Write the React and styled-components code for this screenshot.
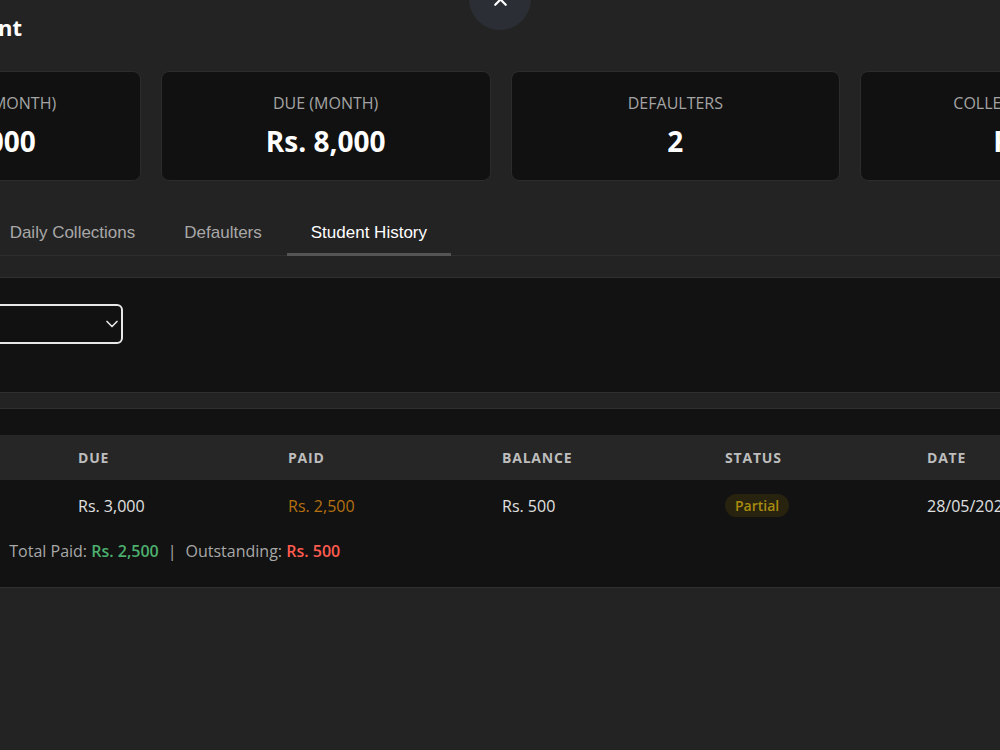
import React from 'react';
import styled, { createGlobalStyle } from 'styled-components';
import { X, ChevronDown } from 'lucide-react';

const GlobalStyle = createGlobalStyle`
  html, body {
    margin: 0;
    padding: 0;
    background: #232323;
  }
  body {
    font-family: "Open Sans", "Noto Sans", sans-serif;
    color: #e6e6e6;
    overflow: hidden;
  }
  * { box-sizing: border-box; }
`;

const Viewport = styled.div`
  width: 100vw;
  height: 100vh;
  overflow: hidden;
  display: flex;
  justify-content: center;
`;

const Modal = styled.div`
  position: relative;
  flex: 0 0 1380px;
  width: 1380px;
  padding-top: 12px;
`;

const CloseButton = styled.button`
  position: absolute;
  top: -32px;
  left: 50%;
  transform: translateX(-50%);
  width: 62px;
  height: 62px;
  border-radius: 50%;
  border: none;
  background: #2b2e35;
  color: #fff;
  display: flex;
  align-items: center;
  justify-content: center;
  padding: 0;
`;

const Header = styled.div`
  display: flex;
  align-items: center;
  height: 30px;
`;

const Title = styled.h2`
  margin: 0;
  width: 212px;
  text-align: right;
  white-space: nowrap;
  font-size: 22px;
  line-height: 30px;
  font-weight: 700;
  color: #fff;
`;

const StatsGrid = styled.div`
  display: grid;
  grid-template-columns: repeat(4, 1fr);
  gap: 20px;
  margin-top: 29px;
  padding-left: 1px;
`;

const StatCard = styled.div`
  height: 110px;
  background: #111;
  border: 1px solid #2c2c2c;
  border-radius: 8px;
  display: flex;
  flex-direction: column;
  align-items: center;
  padding-top: 20px;
`;

const StatLabel = styled.div`
  font-size: 16px;
  line-height: 22px;
  color: #a4a4a4;
  text-transform: uppercase;
`;

const StatValue = styled.div`
  margin-top: 9px;
  font-size: 28px;
  line-height: 36px;
  font-weight: 700;
  color: #fff;
`;

const TabList = styled.div`
  display: flex;
  gap: 1px;
  margin-top: 30px;
  border-bottom: 1px solid #2e2e2e;
`;

const Tab = styled.button`
  background: none;
  border: none;
  border-bottom: 3px solid ${p => (p.$active ? '#555' : 'transparent')};
  margin-bottom: -1px;
  padding: 12px 24px 10px;
  font-family: "Liberation Sans", Arial, sans-serif;
  font-size: 17px;
  line-height: 20px;
  color: ${p => (p.$active ? '#fff' : '#a8a8a8')};
  cursor: pointer;
`;

const Panel = styled.div`
  margin-top: ${p => p.$gap}px;
  background: #121212;
  border: 1px solid #303030;
  border-radius: 8px;
  padding: 26px 24px ${p => p.$bottom}px;
`;

const SelectWrap = styled.div`
  position: relative;
  width: 288px;
`;

const Select = styled.select`
  appearance: none;
  width: 100%;
  height: 40px;
  border: 2px solid #e8e8e8;
  border-radius: 6px;
  background: #111;
  color: #ddd;
  font-family: inherit;
  font-size: 15px;
  padding: 0 30px 0 12px;
  outline: none;
`;

const SelectIcon = styled.span`
  position: absolute;
  right: 1px;
  top: 10px;
  color: #e6e6e6;
  display: flex;
  pointer-events: none;
`;

const Table = styled.table`
  width: 100%;
  border-collapse: collapse;
  table-layout: fixed;
`;

const Th = styled.th`
  background: #262626;
  text-align: left;
  padding: 12px 16px;
  font-size: 14px;
  line-height: 21px;
  font-weight: 700;
  letter-spacing: 0.8px;
  color: #bdbdbd;
  text-transform: uppercase;
`;

const Td = styled.td`
  padding: 14px 16px;
  font-size: 16px;
  line-height: 22px;
  color: ${p => p.$color || '#e0e0e0'};
`;

const Badge = styled.span`
  display: inline-block;
  padding: 2px 10px;
  border-radius: 12px;
  background: #27230f;
  color: #a98b10;
  font-size: 14px;
  line-height: 19px;
  font-weight: 600;
`;

const Summary = styled.div`
  margin-top: 10px;
  font-size: 16px;
  line-height: 20px;
  color: #a8a8a8;
`;

const Amount = styled.span`
  color: ${p => p.$color};
  font-weight: 600;
`;

const Sep = styled.span`
  margin: 0 9px;
`;

const stats = [
  { label: 'Collected (Month)', value: 'Rs. 5,000' },
  { label: 'Due (Month)', value: 'Rs. 8,000' },
  { label: 'Defaulters', value: '2' },
  { label: 'Collected Today', value: 'Rs. 0' },
];

const tabs = ['Record Payment', 'Daily Collections', 'Defaulters', 'Student History'];

export default function App() {
  return (
    <>
      <GlobalStyle />
      <Viewport>
        <Modal>
          <CloseButton aria-label="Close">
            <X size={21} strokeWidth={2.5} />
          </CloseButton>
          <Header>
            <Title>Fee Management</Title>
          </Header>

          <StatsGrid>
            {stats.map(s => (
              <StatCard key={s.label}>
                <StatLabel>{s.label}</StatLabel>
                <StatValue>{s.value}</StatValue>
              </StatCard>
            ))}
          </StatsGrid>

          <TabList>
            {tabs.map(t => (
              <Tab key={t} $active={t === 'Student History'}>{t}</Tab>
            ))}
          </TabList>

          <Panel $gap={21} $bottom={48}>
            <SelectWrap>
              <Select defaultValue="ahmed">
                <option value="ahmed">Ahmed Raza</option>
              </Select>
              <SelectIcon><ChevronDown size={20} strokeWidth={2} /></SelectIcon>
            </SelectWrap>
          </Panel>

          <Panel $gap={15} $bottom={26}>
            <Table>
              <colgroup>
                <col style={{ width: 227 }} />
                <col style={{ width: 210 }} />
                <col style={{ width: 214 }} />
                <col style={{ width: 223 }} />
                <col style={{ width: 202 }} />
                <col />
              </colgroup>
              <thead>
                <tr>
                  <Th>Month</Th>
                  <Th>Due</Th>
                  <Th>Paid</Th>
                  <Th>Balance</Th>
                  <Th>Status</Th>
                  <Th>Date</Th>
                </tr>
              </thead>
              <tbody>
                <tr>
                  <Td>May 2025</Td>
                  <Td>Rs. 3,000</Td>
                  <Td $color="#b5700f">Rs. 2,500</Td>
                  <Td>Rs. 500</Td>
                  <Td><Badge>Partial</Badge></Td>
                  <Td>28/05/2025</Td>
                </tr>
              </tbody>
            </Table>
            <Summary>
              Total Due: <Amount $color="#e0e0e0">Rs. 3,000</Amount>
              <Sep>|</Sep>
              Total Paid: <Amount $color="#4caf6e">Rs. 2,500</Amount>
              <Sep>|</Sep>
              Outstanding: <Amount $color="#ff5b4f">Rs. 500</Amount>
            </Summary>
          </Panel>
        </Modal>
      </Viewport>
    </>
  );
}
